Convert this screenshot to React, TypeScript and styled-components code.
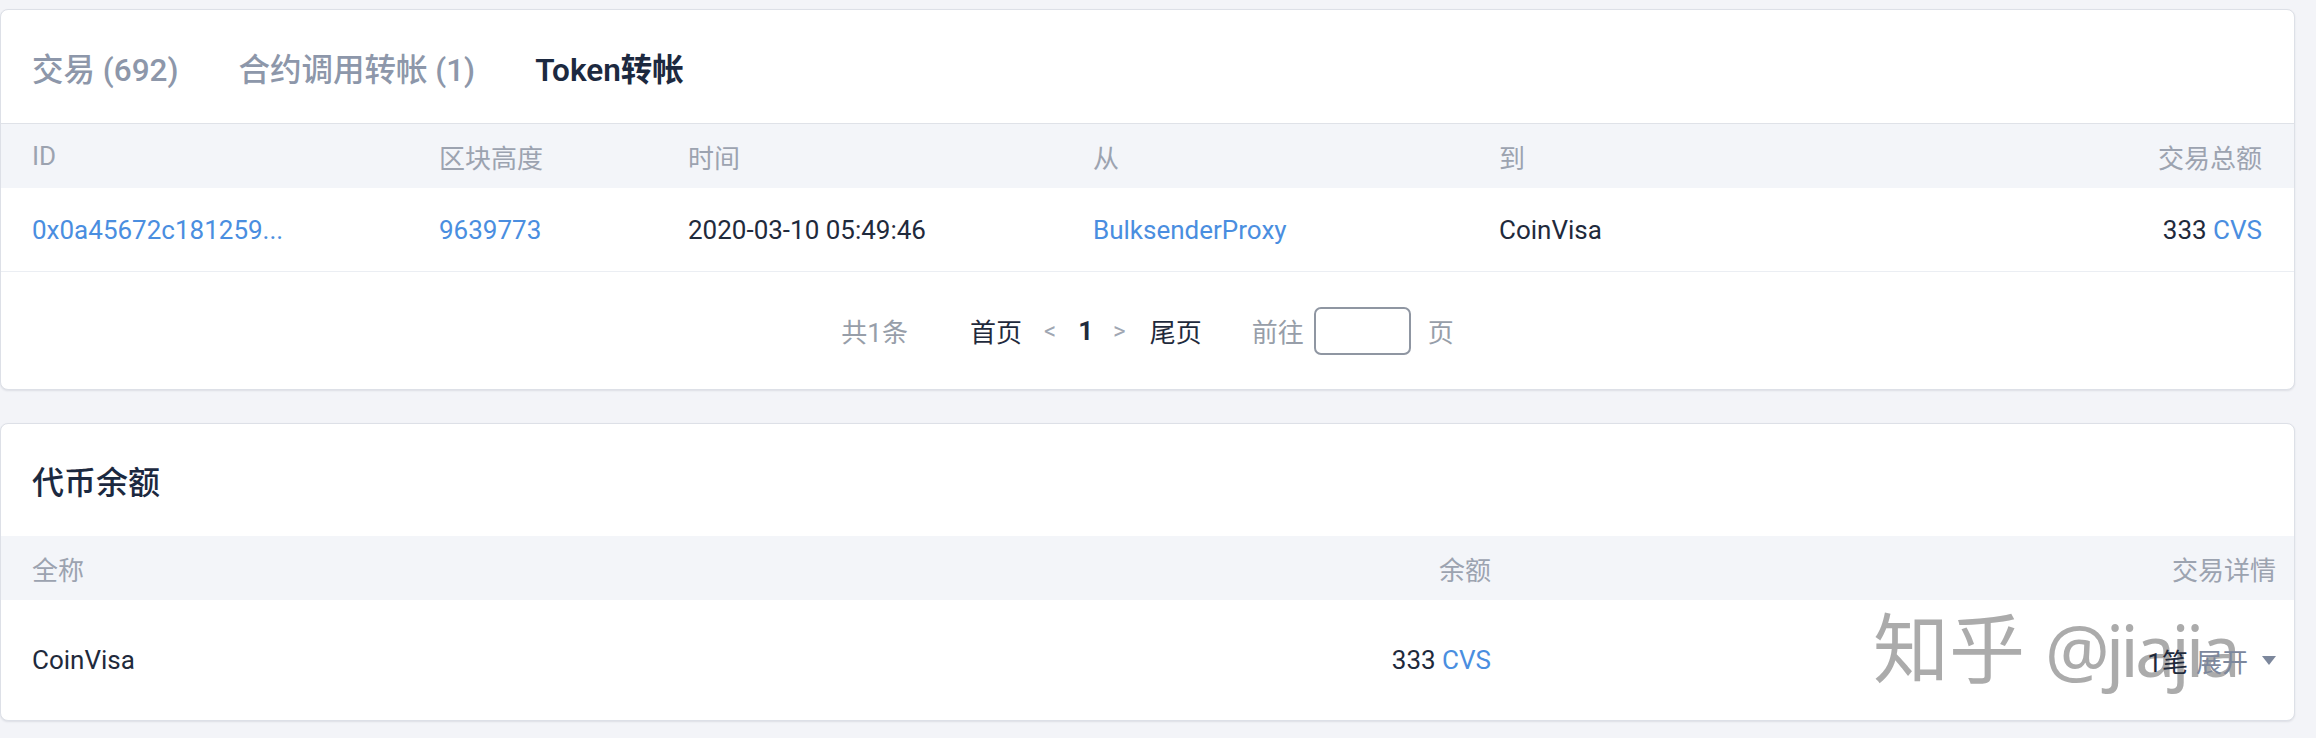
import React from "react";
import styled, { createGlobalStyle } from "styled-components";

const GlobalStyle = createGlobalStyle`
  html, body {
    margin: 0;
    padding: 0;
    background: #f3f4f8;
  }
  body {
    font-family: Roboto, "Noto Sans CJK SC", sans-serif;
    -webkit-font-smoothing: antialiased;
  }
`;

const Page = styled.div`
  display: flex;
  flex-direction: column;
  gap: 33px;
  padding: 9px 21px 17px 0;
  background: #f3f4f8;
  min-height: 738px;
  box-sizing: border-box;
`;

const Card = styled.section`
  position: relative;
  background: #ffffff;
  border: 1px solid #dde0e7;
  border-radius: 8px;
  box-shadow: 0 1px 2px rgba(30, 40, 60, 0.1);
  overflow: hidden;
`;

const TabBar = styled.div`
  display: flex;
  align-items: center;
  gap: 60px;
  height: 113px;
  padding-left: 31px;
  border-bottom: 1px solid #dfe2e8;
`;

const Tab = styled.div<{ $active?: boolean }>`
  font-size: 31.5px;
  font-weight: ${(p) => (p.$active ? 600 : 500)};
  color: ${(p) => (p.$active ? "#1c2940" : "#8d97aa")};
`;

const Row = styled.div<{ $cols: string; $height: number; $head?: boolean; $divider?: boolean; $pr?: number }>`
  display: grid;
  grid-template-columns: ${(p) => p.$cols};
  align-items: center;
  height: ${(p) => p.$height}px;
  padding: 0 ${(p) => p.$pr ?? 32}px 0 31px;
  background: ${(p) => (p.$head ? "#f3f5f9" : "transparent")};
  border-bottom: ${(p) => (p.$divider ? "1px solid #ebeef3" : "none")};
  box-sizing: border-box;
`;

const Cell = styled.div<{ $head?: boolean; $right?: boolean; $link?: boolean }>`
  font-size: 26px;
  color: ${(p) => (p.$head ? "#9ca3b0" : p.$link ? "#4a8ee0" : "#1f2a3c")};
  text-align: ${(p) => (p.$right ? "right" : "left")};
  white-space: nowrap;
`;

const Unit = styled.span`
  color: #4a8ee0;
`;

const Pager = styled.div`
  display: flex;
  align-items: center;
  justify-content: center;
  height: 117px;
  font-size: 26px;
`;

const PagerText = styled.span<{ $tone: "muted" | "dark" | "arrow"; $mr?: number; $ml?: number; $bold?: boolean }>`
  color: ${(p) => (p.$tone === "dark" ? "#1f2a3c" : p.$tone === "arrow" ? "#a0a7b3" : "#979ea9")};
  font-size: ${(p) => (p.$tone === "arrow" ? "24px" : "26px")};
  font-weight: ${(p) => (p.$bold ? 700 : 400)};
  margin-right: ${(p) => p.$mr ?? 0}px;
  margin-left: ${(p) => p.$ml ?? 0}px;
`;

const PageInput = styled.input`
  width: 97px;
  height: 48px;
  box-sizing: border-box;
  border: 2px solid #8f96a2;
  border-radius: 7px;
  background: #fff;
  outline: none;
  padding: 0;
`;

const CardTitle = styled.h2`
  display: flex;
  align-items: center;
  height: 112px;
  margin: 0;
  padding-left: 31px;
  font-size: 32px;
  font-weight: 500;
  color: #1c2940;
`;

const Detail = styled.div`
  position: relative;
  z-index: 1;
  display: flex;
  justify-content: flex-end;
  align-items: center;
  gap: 8px;
  font-size: 26px;
  color: #1f2a3c;
`;

const Expand = styled.span`
  color: #7c879c;
`;

const Caret = styled.span`
  width: 0;
  height: 0;
  margin-left: 6px;
  border-left: 7px solid transparent;
  border-right: 7px solid transparent;
  border-top: 9px solid #7c879c;
`;

const Watermark = styled.div`
  position: absolute;
  left: 1872px;
  top: 182px;
  display: flex;
  align-items: baseline;
  gap: 20px;
  font-family: "Noto Sans CJK SC", sans-serif;
  font-size: 76px;
  font-weight: 400;
  line-height: 1;
  color: rgba(150, 150, 150, 0.8);
  text-shadow: -3px -2px 0 #ffffff;
  white-space: nowrap;
  pointer-events: none;
`;

const WatermarkHandle = styled.span`
  font-family: "Noto Sans", sans-serif;
  font-size: 72px;
  letter-spacing: -4px;
`;

const TX_COLS = "407px 249px 405px 406px 1fr auto";
const BAL_COLS = "1fr 600px 785px";

export default function App() {
  return (
    <>
      <GlobalStyle />
      <Page>
        <Card>
          <TabBar>
            <Tab>交易 (692)</Tab>
            <Tab>合约调用转帐 (1)</Tab>
            <Tab $active>Token转帐</Tab>
          </TabBar>
          <Row $cols={TX_COLS} $height={64} $head>
            <Cell $head>ID</Cell>
            <Cell $head>区块高度</Cell>
            <Cell $head>时间</Cell>
            <Cell $head>从</Cell>
            <Cell $head>到</Cell>
            <Cell $head $right>交易总额</Cell>
          </Row>
          <Row $cols={TX_COLS} $height={84} $divider>
            <Cell $link>0x0a45672c181259...</Cell>
            <Cell $link>9639773</Cell>
            <Cell>2020-03-10 05:49:46</Cell>
            <Cell $link>BulksenderProxy</Cell>
            <Cell>CoinVisa</Cell>
            <Cell $right>
              333 <Unit>CVS</Unit>
            </Cell>
          </Row>
          <Pager>
            <PagerText $tone="muted" $mr={62}>共1条</PagerText>
            <PagerText $tone="dark" $mr={22}>首页</PagerText>
            <PagerText $tone="arrow" $mr={22}>&lt;</PagerText>
            <PagerText $tone="dark" $bold $mr={20}>1</PagerText>
            <PagerText $tone="arrow" $mr={24}>&gt;</PagerText>
            <PagerText $tone="dark" $mr={50}>尾页</PagerText>
            <PagerText $tone="muted" $mr={10}>前往</PagerText>
            <PageInput aria-label="page" />
            <PagerText $tone="muted" $ml={17}>页</PagerText>
          </Pager>
        </Card>
        <Card>
          <CardTitle>代币余额</CardTitle>
          <Row $cols={BAL_COLS} $height={64} $head $pr={18}>
            <Cell $head>全称</Cell>
            <Cell $head $right>余额</Cell>
            <Cell $head $right>交易详情</Cell>
          </Row>
          <Row $cols={BAL_COLS} $height={120} $pr={18}>
            <Cell>CoinVisa</Cell>
            <Cell $right>
              333 <Unit>CVS</Unit>
            </Cell>
            <Detail>
              <span>1笔</span>
              <Expand>展开</Expand>
              <Caret />
            </Detail>
          </Row>
          <Watermark>
            <span>知乎</span>
            <WatermarkHandle>@jiajia</WatermarkHandle>
          </Watermark>
        </Card>
      </Page>
    </>
  );
}
